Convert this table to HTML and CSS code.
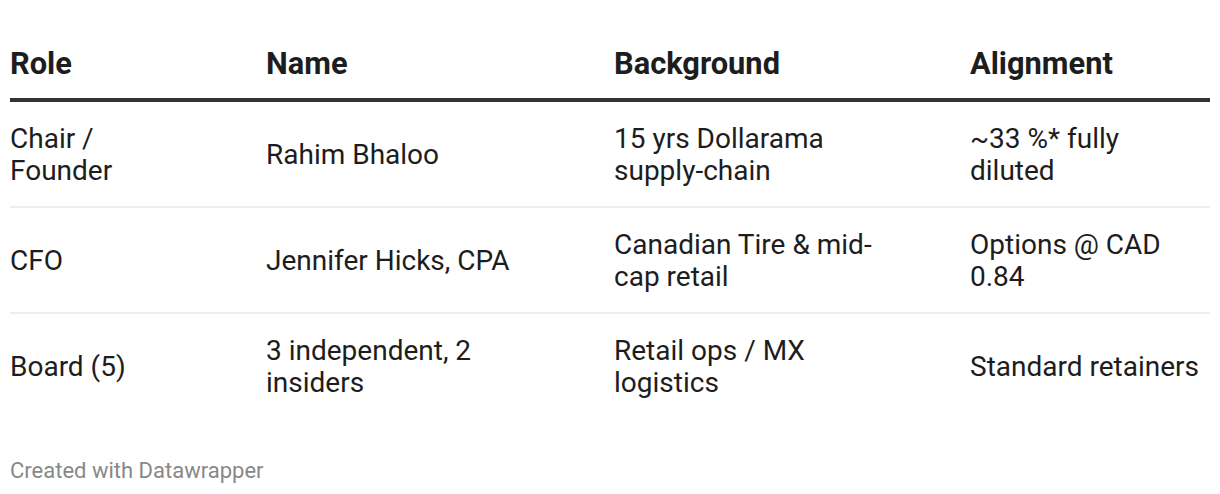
FILE: index.html
```html
<!DOCTYPE html>
<html>
<head>
<meta charset="utf-8">
<link rel="stylesheet" href="styles.css">
</head>
<body>
<div class="chart">
  <div class="table">
    <div class="row head">
      <div class="cell c1">Role</div>
      <div class="cell c2">Name</div>
      <div class="cell c3">Background</div>
      <div class="cell c4">Alignment</div>
    </div>
    <div class="row">
      <div class="cell c1">Chair / Founder</div>
      <div class="cell c2">Rahim Bhaloo</div>
      <div class="cell c3">15 yrs Dollarama supply-chain</div>
      <div class="cell c4">~33 %* fully diluted</div>
    </div>
    <div class="row">
      <div class="cell c1">CFO</div>
      <div class="cell c2">Jennifer Hicks, CPA</div>
      <div class="cell c3">Canadian Tire &amp; mid-cap retail</div>
      <div class="cell c4">Options @ CAD 0.84</div>
    </div>
    <div class="row last">
      <div class="cell c1">Board (5)</div>
      <div class="cell c2">3 independent, 2 insiders</div>
      <div class="cell c3">Retail ops / MX logistics</div>
      <div class="cell c4">Standard retainers</div>
    </div>
  </div>
  <div class="footer">Created with Datawrapper</div>
</div>
</body>
</html>
```
FILE: styles.css
```css
html, body {
  margin: 0;
  padding: 0;
  background: #fff;
}
.chart {
  padding: 46px 10px 0 10px;
  font-family: Roboto, "Liberation Sans", sans-serif;
  color: #1d1d1d;
}
.row {
  display: grid;
  grid-template-columns: 256px 348px 356px 240px;
  align-items: center;
  border-bottom: 2px solid #eeeeee;
}
.row.head {
  border-bottom: 4px solid #333;
  align-items: end;
}
.row.last {
  border-bottom: none;
}
.cell {
  font-size: 28px;
  line-height: 32px;
  padding: 21px 0 19px 0;
}
.head .cell {
  font-size: 30.8px;
  line-height: 36px;
  font-weight: 700;
  padding: 0 0 16px 0;
}
.c1 { padding-right: 80px; }
.c2 { padding-right: 50px; }
.c3 { padding-right: 80px; }
.c4 { padding-right: 6px; }
.footer {
  margin-top: 40px;
  font-size: 22px;
  line-height: 26px;
  color: #888;
}
```
